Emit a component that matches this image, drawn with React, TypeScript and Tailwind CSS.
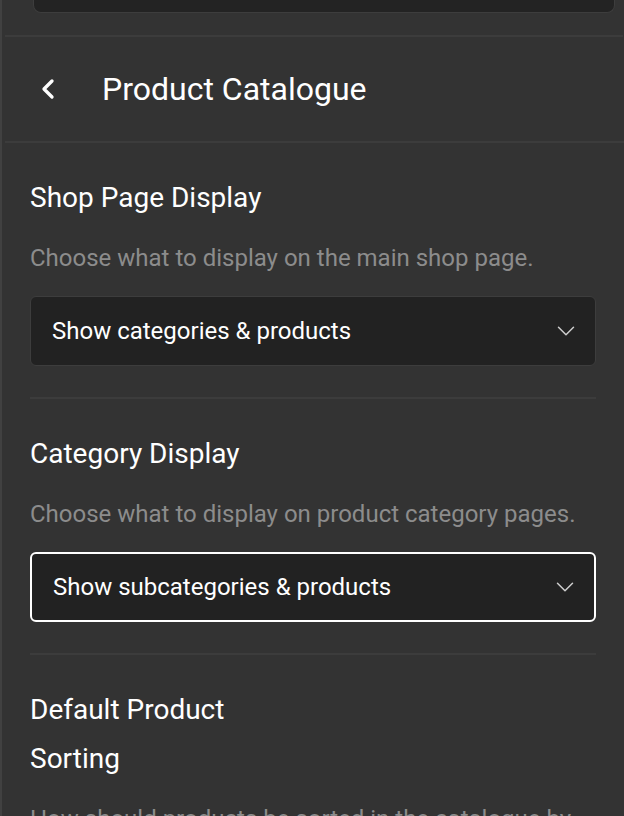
import { ChevronLeft, ChevronDown } from 'lucide-react'

const SECTIONS = [
  {
    title: 'Shop Page Display',
    desc: 'Choose what to display on the main shop page.',
    value: 'Show categories & products',
    focused: false,
  },
  {
    title: 'Category Display',
    desc: 'Choose what to display on product category pages.',
    value: 'Show subcategories & products',
    focused: true,
  },
]

function Select({ value, focused }: { value: string; focused: boolean }) {
  return (
    <div
      className={
        'flex h-[70px] items-center justify-between rounded-md bg-[#222222] pl-[21px] pr-[14px] ' +
        (focused ? 'border-2 border-white' : 'border border-[#3d3d3d]')
      }
    >
      <span className="text-[24px] text-white">{value}</span>
      <ChevronDown className="h-[30px] w-[30px] text-[#cfcfcf]" strokeWidth={1.2} />
    </div>
  )
}

export default function App() {
  return (
    <div
      className="h-[816px] w-[624px] overflow-hidden border-l-2 border-[#414141] bg-[#333333]"
      style={{ fontFamily: 'Roboto, "Noto Sans", sans-serif' }}
    >
      <div className="pb-[22px] pl-[31px] pr-[9px]">
        <div className="h-[13px] rounded-b-lg border border-t-0 border-[#3d3d3d] bg-[#232323]" />
      </div>
      <div className="ml-[3px] mr-[1px] h-[2px] bg-[#3c3c3c]" />

      <header className="flex h-[104px] items-center">
        <ChevronLeft className="ml-[30px] h-8 w-8 text-white" strokeWidth={2.5} />
        <h1 className="ml-[38px] text-[32px] text-white">Product Catalogue</h1>
      </header>
      <div className="ml-[3px] h-[2px] bg-[#3c3c3c]" />

      <div className="px-[28px]">
        {SECTIONS.map((s) => (
          <section key={s.title} className="border-b-2 border-[#3c3c3c] pb-[31px] pt-[30px]">
            <h2 className="text-[28px] leading-[49px] text-white">{s.title}</h2>
            <p className="mt-[18px] text-[24px] leading-[36px] text-[#8c8c8c]">{s.desc}</p>
            <div className="mt-[20px]">
              <Select value={s.value} focused={s.focused} />
            </div>
          </section>
        ))}
        <section className="pt-[30px]">
          <h2 className="w-[260px] text-[28px] leading-[49px] text-white">Default Product Sorting</h2>
          <p className="mt-[18px] text-[24px] leading-[36px] text-[#8c8c8c]">
            How should products be sorted in the catalogue by default?
          </p>
        </section>
      </div>
    </div>
  )
}
